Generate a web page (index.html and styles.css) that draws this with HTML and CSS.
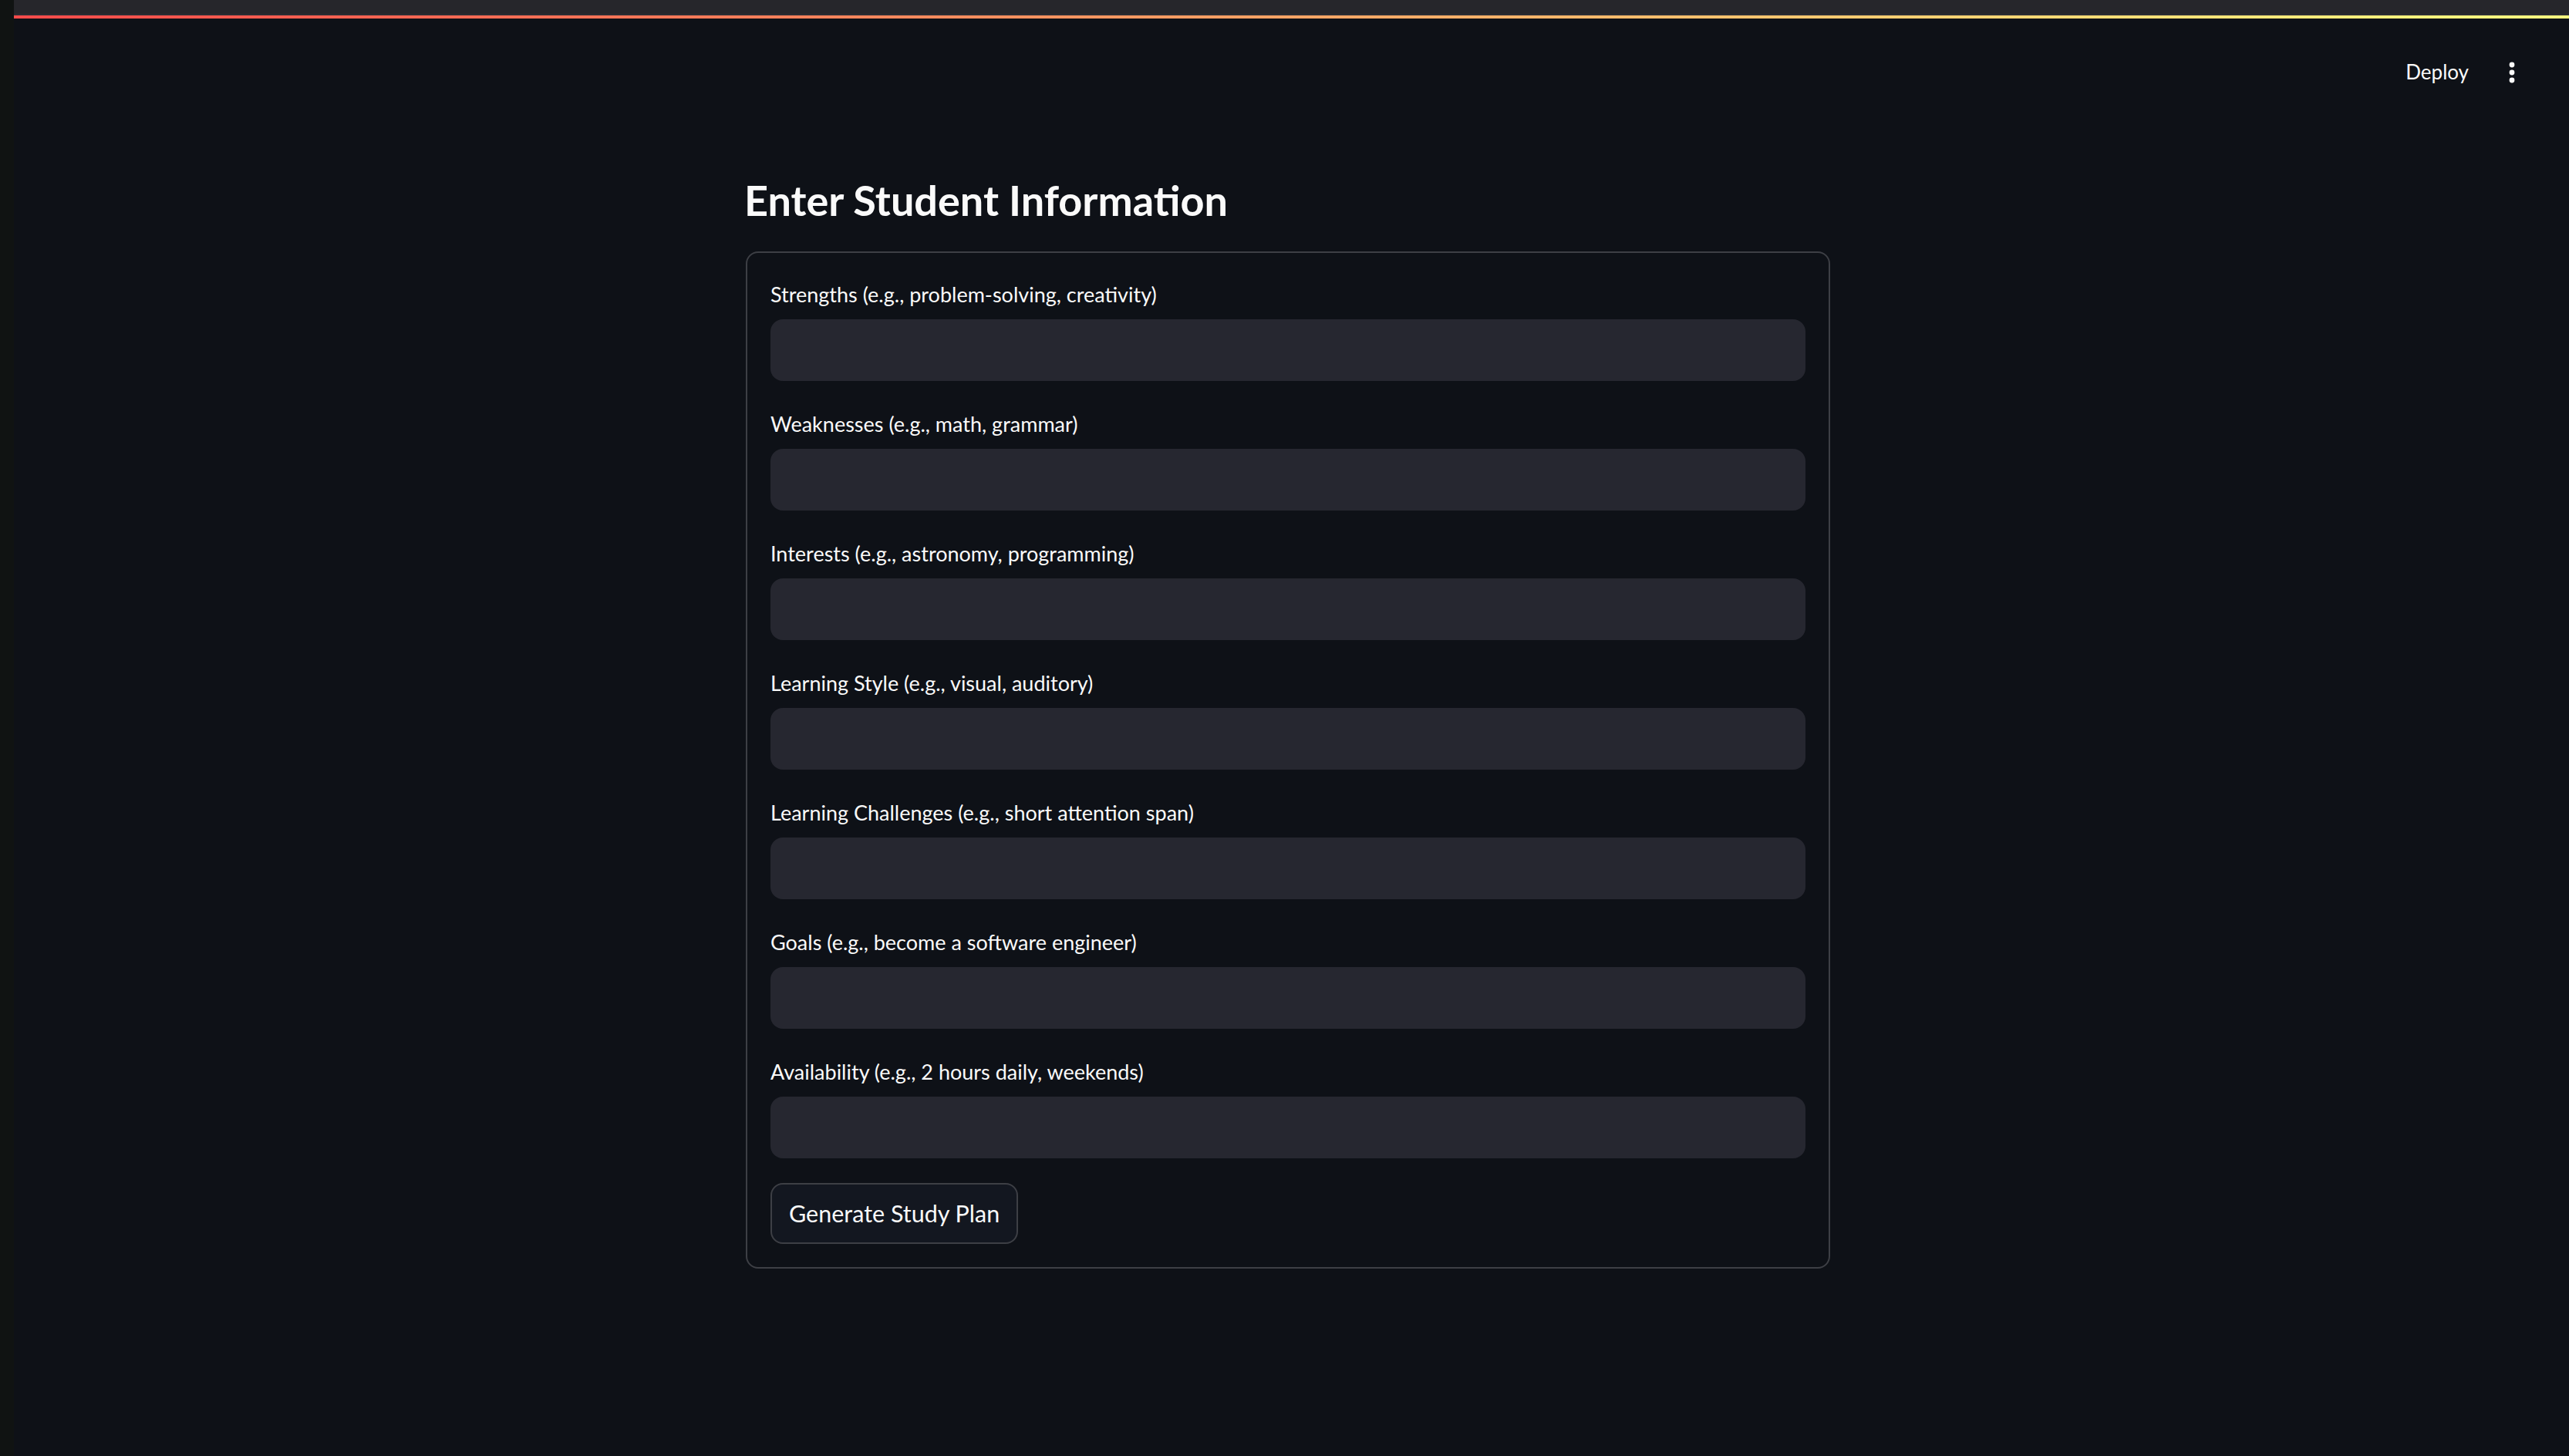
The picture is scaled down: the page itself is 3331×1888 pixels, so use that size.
FILE: index.html
```html
<!DOCTYPE html>
<html lang="en">
<head>
<meta charset="utf-8">
<title>Study Plan</title>
<link rel="stylesheet" href="styles.css">
</head>
<body>
<div class="app">
  <aside class="strip"></aside>
  <div class="main">
    <div class="topband"></div>
    <div class="topline"></div>
    <div class="decoration"></div>
    <header class="toolbar">
      <span class="deploy">Deploy</span>
      <span class="kebab">
        <svg width="24" height="32" viewBox="0 0 24 32"><circle cx="12" cy="6" r="3.4" fill="#fafafa"/><circle cx="12" cy="16" r="3.4" fill="#fafafa"/><circle cx="12" cy="26" r="3.4" fill="#fafafa"/></svg>
      </span>
    </header>
    <section class="block">
      <h3 class="title">Enter Student Information</h3>
      <form class="form">
        <div class="field"><label class="label">Strengths (e.g., problem-solving, creativity)</label><div class="input"></div></div>
        <div class="field"><label class="label">Weaknesses (e.g., math, grammar)</label><div class="input"></div></div>
        <div class="field"><label class="label">Interests (e.g., astronomy, programming)</label><div class="input"></div></div>
        <div class="field"><label class="label">Learning Style (e.g., visual, auditory)</label><div class="input"></div></div>
        <div class="field"><label class="label">Learning Challenges (e.g., short attention span)</label><div class="input"></div></div>
        <div class="field"><label class="label">Goals (e.g., become a software engineer)</label><div class="input"></div></div>
        <div class="field"><label class="label">Availability (e.g., 2 hours daily, weekends)</label><div class="input"></div></div>
        <div class="actions"><button type="button" class="btn">Generate Study Plan</button></div>
      </form>
    </section>
  </div>
</div>
</body>
</html>
```

FILE: styles.css
```css
* { box-sizing: border-box; }
html, body { margin: 0; padding: 0; }
body {
  background: #0e1117;
  color: #fafafa;
  font-family: Lato, "Noto Sans", sans-serif;
  width: 3331px;
  height: 1888px;
  overflow: hidden;
}
.app {
  display: flex;
  height: 1888px;
}
.strip {
  width: 18px;
  flex: 0 0 18px;
  background: #101312;
}
.main {
  flex: 1;
  display: flex;
  flex-direction: column;
  padding-right: 9px;
}
.topband {
  height: 18px;
  background: #26262b;
  margin-right: -9px;
}
.topline {
  height: 2px;
  background: #2b2d33;
  margin-right: -9px;
}
.decoration {
  height: 4px;
  background: linear-gradient(90deg, #ff4b4b, #fffd80);
  margin-right: -9px;
}
.toolbar {
  display: flex;
  justify-content: flex-end;
  align-items: center;
  gap: 44px;
  padding-top: 54px;
  padding-right: 53px;
}
.deploy {
  font-size: 26px;
  line-height: 1.2;
  color: #fafafa;
}
.kebab {
  display: flex;
  align-items: center;
}
.block {
  width: 1406px;
  margin: 0 auto;
  padding-top: 118px;
}
.title {
  margin: 0 0 33px -2px;
  font-size: 54px;
  line-height: 1.2;
  font-weight: 700;
  color: #fafafa;
}
.form {
  border: 2px solid #3d3f45;
  border-radius: 16px;
  padding: 30px;
  display: flex;
  flex-direction: column;
  gap: 32px;
}
.field {
  display: flex;
  flex-direction: column;
}
.label {
  display: block;
  height: 48px;
  padding-top: 8px;
  margin-bottom: 8px;
  font-size: 27px;
  line-height: 1.2;
  color: #fafafa;
}
.input {
  height: 80px;
  background: #262730;
  border-radius: 16px;
}
.actions { display: flex; }
.btn {
  height: 79px;
  padding: 0 22px;
  background: #131720;
  border: 2px solid #3d3f45;
  border-radius: 16px;
  color: #fafafa;
  font-family: Lato, "Noto Sans", sans-serif;
  font-size: 30.5px;
  line-height: 1;
}
```
